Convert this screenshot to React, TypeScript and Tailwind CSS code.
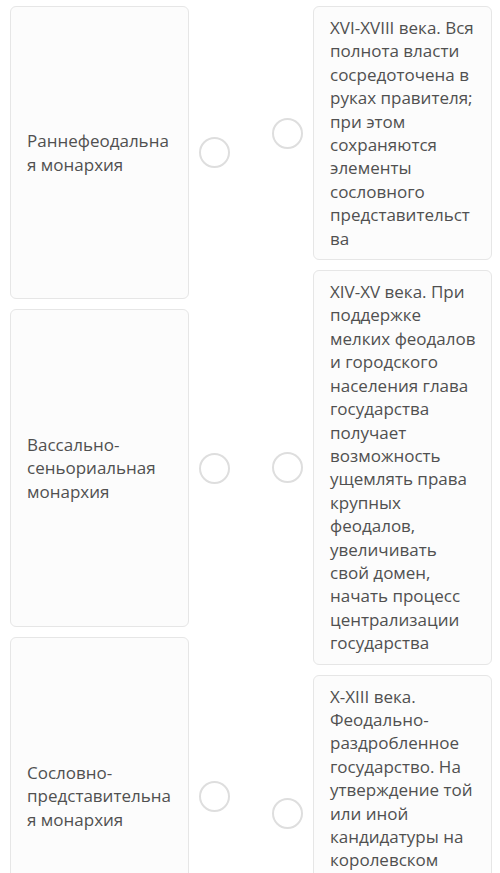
const left = [
  { text: "Раннефеодальная монархия", h: "h-[293px]" },
  { text: "Вассально-сеньориальная монархия", h: "h-[318px]" },
  { text: "Сословно-представительная монархия", h: "h-[318px]" },
];

const right = [
  "XVI-XVIII века. Вся полнота власти сосредоточена в руках правителя; при этом сохраняются элементы сословного представительства",
  "XIV-XV века. При поддержке мелких феодалов и городского населения глава государства получает возможность ущемлять права крупных феодалов, увеличивать свой домен, начать процесс централизации государства",
  "X-XIII века. Феодально-раздробленное государство. На утверждение той или иной кандидатуры на королевском престол влияли крупные феодалы",
];

function Dot() {
  return <div className="h-[31px] w-[31px] shrink-0 rounded-full border-2 border-[#dedede] bg-white" />;
}

export default function App() {
  return (
    <div className="min-h-screen bg-white font-['Open_Sans',sans-serif] text-[17px] leading-[23.4px] text-[#505050]">
      <div className="flex gap-[42px] px-[10px] pt-[6px]">
        <div className="flex w-[220px] flex-col gap-[10px]">
          {left.map((item) => (
            <div key={item.text} className="flex items-center gap-[10px]">
              <div
                className={`flex w-[179px] items-center rounded-md border border-[#e6e6e6] bg-[#fcfcfc] pl-4 pr-3 ${item.h}`}
              >
                <p className="w-full break-words">{item.text}</p>
              </div>
              <Dot />
            </div>
          ))}
        </div>
        <div className="flex w-[220px] flex-col gap-[10px]">
          {right.map((text) => (
            <div key={text} className="flex items-center gap-[10px]">
              <Dot />
              <div className="w-[179px] rounded-md border border-[#e6e6e6] bg-[#fcfcfc] py-[9px] pl-4 pr-3">
                <p className="break-words">{text}</p>
              </div>
            </div>
          ))}
        </div>
      </div>
    </div>
  );
}
